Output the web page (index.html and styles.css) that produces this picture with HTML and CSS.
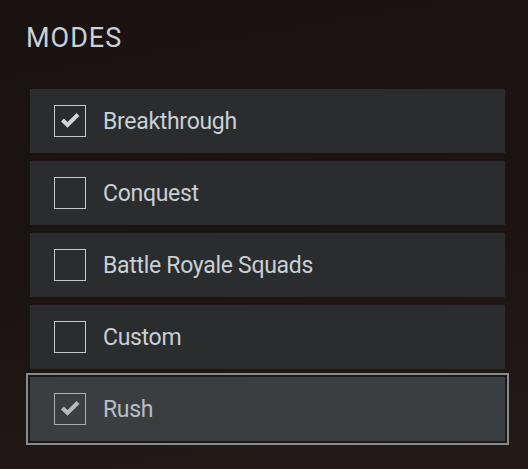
FILE: index.html
```html
<!DOCTYPE html>
<html lang="en">
<head>
<meta charset="utf-8">
<title>Modes</title>
<link rel="stylesheet" href="styles.css">
</head>
<body>
<div class="panel">
  <h1 class="title">MODES</h1>
  <ul class="modes">
    <li class="mode">
      <span class="box"><svg viewBox="0 0 32 32" width="32" height="32"><path d="M8.5 15 L13.5 20 L24 9.5" /></svg></span>
      <span class="label">Breakthrough</span>
    </li>
    <li class="mode">
      <span class="box"></span>
      <span class="label">Conquest</span>
    </li>
    <li class="mode">
      <span class="box"></span>
      <span class="label">Battle Royale Squads</span>
    </li>
    <li class="mode">
      <span class="box"></span>
      <span class="label">Custom</span>
    </li>
    <li class="mode mode-focus">
      <span class="box"><svg viewBox="0 0 32 32" width="32" height="32"><path d="M8.5 15 L13.5 20 L24 9.5" /></svg></span>
      <span class="label">Rush</span>
    </li>
  </ul>
</div>
</body>
</html>
```
FILE: styles.css
```css
html, body {
  margin: 0;
  padding: 0;
}
body {
  width: 528px;
  height: 469px;
  overflow: hidden;
  background: linear-gradient(170deg, #1a1211 0%, #1c1413 55%, #231a18 100%);
  font-family: Roboto, "Liberation Sans", sans-serif;
  color: #c8d0d5;
}
.panel {
  padding: 22px 0 0 26px;
}
.title {
  margin: 0;
  font-size: 27px;
  line-height: 32px;
  font-weight: 400;
  letter-spacing: 1px;
  color: #c8d1d7;
}
.modes {
  list-style: none;
  margin: 35px 0 0 4px;
  padding: 0;
  width: 475px;
  display: flex;
  flex-direction: column;
  gap: 8px;
}
.mode {
  height: 64px;
  display: flex;
  align-items: center;
  padding-left: 24px;
  background: #2a2c2e;
}
.box {
  width: 32px;
  height: 32px;
  box-sizing: border-box;
  border: 1px solid #c3cbd0;
  flex: none;
  position: relative;
}
.box svg {
  position: absolute;
  left: -1px;
  top: -1px;
}
.box path {
  fill: none;
  stroke: #d0d7db;
  stroke-width: 4;
}
.label {
  margin-left: 17px;
  font-size: 23px;
  line-height: 27px;
  letter-spacing: -0.3px;
  color: #c8d0d5;
}
.mode-focus {
  background: #3b3e41;
  outline: 2px solid #858c90;
  outline-offset: 2px;
}
.mode-focus .box {
  border-color: #a6aeb2;
}
.mode-focus .box path {
  stroke: #b4bbbf;
}
.mode-focus .label {
  color: #b8bfc3;
}
```
